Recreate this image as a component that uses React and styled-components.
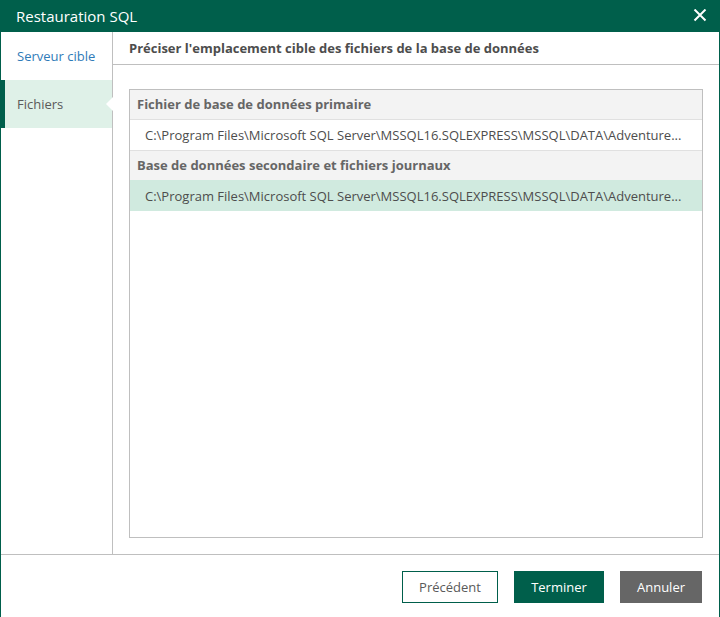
import React from "react";
import styled, { createGlobalStyle } from "styled-components";

const Global = createGlobalStyle`
  html, body { margin: 0; padding: 0; background: #fff; }
  body { font-family: "Open Sans", "Liberation Sans", sans-serif; font-size: 13px; color: #4d4d4d; }
`;

const Dialog = styled.div`
  width: 720px;
  height: 617px;
  box-sizing: border-box;
  display: flex;
  flex-direction: column;
  border-left: 1px solid #005f4b;
  border-right: 1px solid #005f4b;
  background: #fff;
`;

const TitleBar = styled.header`
  height: 32px;
  margin: 0 -1px;
  flex: none;
  background: #005f4b;
  color: #fff;
  display: flex;
  align-items: center;
  justify-content: space-between;
  padding: 0 13px 0 16px;
  font-size: 15px;
`;

const CloseButton = styled.button`
  width: 14px;
  height: 14px;
  padding: 0;
  border: 0;
  background: none;
  display: flex;
  color: #fff;
`;

const Main = styled.div`
  flex: 1;
  min-height: 0;
  display: flex;
  border-bottom: 1px solid #bfbfbf;
`;

const Sidebar = styled.nav`
  width: 111px;
  flex: none;
  border-right: 1px solid #bfbfbf;
  display: flex;
  flex-direction: column;
`;

const NavItem = styled.div`
  position: relative;
  height: 48px;
  display: flex;
  align-items: center;
  box-sizing: border-box;
  margin-left: ${(p) => (p.$active ? "-1px" : "0")};
  padding-left: ${(p) => (p.$active ? "12px" : "16px")};
  border-left: ${(p) => (p.$active ? "5px solid #005f4b" : "0")};
  background: ${(p) => (p.$active ? "#dff1e8" : "#fff")};
  color: ${(p) => (p.$active ? "#5a5a5a" : "#2f7bb8")};
`;

const Pointer = styled.span`
  position: absolute;
  right: -1px;
  top: 17px;
  width: 0;
  height: 0;
  border-top: 7px solid transparent;
  border-bottom: 7px solid transparent;
  border-right: 7px solid #fff;
`;

const Content = styled.section`
  flex: 1;
  min-width: 0;
  display: flex;
  flex-direction: column;
`;

const Heading = styled.h1`
  margin: 0;
  height: 33px;
  flex: none;
  box-sizing: border-box;
  padding: 0 16px;
  display: flex;
  align-items: center;
  border-bottom: 1px solid #bfbfbf;
  font-size: 13px;
  font-weight: 700;
  color: #4d4d4d;
`;

const Body = styled.div`
  flex: 1;
  min-height: 0;
  display: flex;
  padding: 24px 16px 16px;
`;

const FileList = styled.div`
  flex: 1;
  min-width: 0;
  box-sizing: border-box;
  border: 1px solid #bfbfbf;
  display: flex;
  flex-direction: column;
`;

const GroupHeader = styled.div`
  height: 29px;
  flex: none;
  box-sizing: border-box;
  padding: 0 7px 1px;
  display: flex;
  align-items: center;
  background: #f3f3f3;
  font-weight: 700;
  color: #666;
`;

const FileRow = styled.div`
  height: ${(p) => (p.$selected ? "31px" : "32px")};
  flex: none;
  box-sizing: border-box;
  padding: 0 15px;
  display: flex;
  align-items: center;
  background: ${(p) => (p.$selected ? "#d0eadf" : "#fff")};
  border-top: ${(p) => (p.$selected ? "0" : "1px solid #e0e0e0")};
  border-bottom: ${(p) => (p.$selected ? "0" : "1px solid #e0e0e0")};
  color: #4d4d4d;
  white-space: nowrap;
`;

const Footer = styled.footer`
  height: 62px;
  flex: none;
  box-sizing: border-box;
  display: flex;
  justify-content: flex-end;
  align-items: flex-start;
  gap: 16px;
  padding: 16px 17px 0 0;
`;

const Button = styled.button`
  height: 32px;
  width: ${(p) => p.$w}px;
  box-sizing: border-box;
  padding: 0;
  font-family: inherit;
  font-size: 13px;
  border: 1px solid ${(p) => (p.$kind === "gray" ? "#666" : "#005f4b")};
  background: ${(p) => (p.$kind === "primary" ? "#005f4b" : p.$kind === "gray" ? "#666" : "#fff")};
  color: ${(p) => (p.$kind === "outline" ? "#5a5a5a" : "#fff")};
`;

const path = "C:\\Program Files\\Microsoft SQL Server\\MSSQL16.SQLEXPRESS\\MSSQL\\DATA\\Adventure...";

export default function App() {
  return (
    <>
      <Global />
      <Dialog>
        <TitleBar>
          <span>Restauration SQL</span>
          <CloseButton aria-label="Fermer">
            <svg width="14" height="14" viewBox="0 0 14 14" fill="none" stroke="currentColor" strokeWidth="2">
              <path d="M1.5.5 12.5 11.5M12.5.5 1.5 11.5" />
            </svg>
          </CloseButton>
        </TitleBar>
        <Main>
          <Sidebar>
            <NavItem>Serveur cible</NavItem>
            <NavItem $active>
              Fichiers
              <Pointer />
            </NavItem>
          </Sidebar>
          <Content>
            <Heading>Préciser l'emplacement cible des fichiers de la base de données</Heading>
            <Body>
              <FileList>
                <GroupHeader>Fichier de base de données primaire</GroupHeader>
                <FileRow>{path}</FileRow>
                <GroupHeader>Base de données secondaire et fichiers journaux</GroupHeader>
                <FileRow $selected>{path}</FileRow>
              </FileList>
            </Body>
          </Content>
        </Main>
        <Footer>
          <Button $kind="outline" $w={96}>Précédent</Button>
          <Button $kind="primary" $w={90}>Terminer</Button>
          <Button $kind="gray" $w={82}>Annuler</Button>
        </Footer>
      </Dialog>
    </>
  );
}
